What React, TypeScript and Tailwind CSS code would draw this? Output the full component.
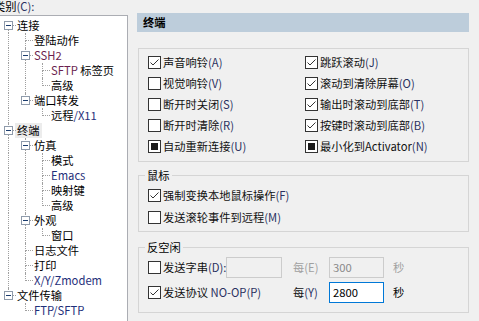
import type { ReactNode } from "react";

type TreeRow = {
  label: ReactNode;
  guides: boolean[];
  kids?: boolean;
  last?: boolean;
  first?: boolean;
  sel?: boolean;
};

const red = (t: string) => <span className="text-[#6b1f4f]">{t}</span>;
const blue = (t: string) => <span className="text-[#1f2f7a]">{t}</span>;

const tree: TreeRow[] = [
  { label: "连接", guides: [], kids: true, first: true },
  { label: "登陆动作", guides: [true] },
  { label: red("SSH2"), guides: [true], kids: true },
  { label: <>{red("SFTP")} 标签页</>, guides: [true, true] },
  { label: "高级", guides: [true, true], last: true },
  { label: "端口转发", guides: [true], kids: true, last: true },
  { label: <>远程{blue("/X11")}</>, guides: [true, false], last: true },
  { label: "终端", guides: [], kids: true, sel: true },
  { label: "仿真", guides: [true], kids: true },
  { label: "模式", guides: [true, true] },
  { label: blue("Emacs"), guides: [true, true] },
  { label: "映射键", guides: [true, true] },
  { label: "高级", guides: [true, true], last: true },
  { label: "外观", guides: [true], kids: true },
  { label: "窗口", guides: [true, true], last: true },
  { label: "日志文件", guides: [true] },
  { label: "打印", guides: [true] },
  { label: blue("X/Y/Zmodem"), guides: [true], last: true },
  { label: "文件传输", guides: [], kids: true, last: true },
  { label: blue("FTP/SFTP"), guides: [false], last: true },
];

function Row({ row }: { row: TreeRow }) {
  return (
    <div className="flex h-[15px] items-center">
      {row.guides.map((g, i) => (
        <div key={i} className="relative h-full w-[17px] shrink-0">
          {g && <div className="absolute left-[8px] top-0 bottom-0 border-l border-dotted border-[#a0a0a0]" />}
        </div>
      ))}
      <div className="relative h-full w-[17px] shrink-0">
        {!row.first && <div className="absolute left-[8px] top-0 h-[8px] border-l border-dotted border-[#a0a0a0]" />}
        {!row.last && <div className="absolute left-[8px] top-[7px] bottom-0 border-l border-dotted border-[#a0a0a0]" />}
        <div className="absolute left-[9px] top-[7px] w-[7px] border-t border-dotted border-[#a0a0a0]" />
        {row.kids && (
          <div className="absolute left-[4px] top-[3px] flex h-[9px] w-[9px] items-center justify-center border border-[#8f9bab] bg-white">
            <div className="h-px w-[5px] bg-[#1a3c6e]" />
          </div>
        )}
      </div>
      <span
        className={`whitespace-nowrap text-[11.25px] leading-[15px] text-black ${row.sel ? "-ml-[2px] bg-[#ececec] px-[2px]" : ""}`}
      >
        {row.label}
      </span>
    </div>
  );
}

function Check({ state }: { state: "on" | "off" | "mixed" }) {
  return (
    <span className="flex h-[13px] w-[13px] shrink-0 items-center justify-center border border-[#333333] bg-white">
      {state === "on" && (
        <svg width="11" height="11" viewBox="0 0 11 11">
          <path d="M1.5 5.5 L4 8 L9.5 2.5" stroke="#333" strokeWidth="1" fill="none" />
        </svg>
      )}
      {state === "mixed" && <span className="h-[7px] w-[7px] bg-[#1a1a1a]" />}
    </span>
  );
}

function Opt({ state, text, key2 }: { state: "on" | "off" | "mixed"; text: string; key2: string }) {
  return (
    <div className="flex items-center">
      <Check state={state} />
      <span className="ml-[2px] whitespace-nowrap text-[11.25px] text-[#111]">
        {text}
        <span className="text-[#2a3060]">{key2}</span>
      </span>
    </div>
  );
}

export default function App() {
  const left: [("on" | "off" | "mixed"), string, string][] = [
    ["on", "声音响铃", "(A)"],
    ["off", "视觉响铃", "(V)"],
    ["off", "断开时关闭", "(S)"],
    ["off", "断开时清除", "(R)"],
    ["mixed", "自动重新连接", "(U)"],
  ];
  const right: [("on" | "off" | "mixed"), string, string][] = [
    ["on", "跳跃滚动", "(J)"],
    ["on", "滚动到清除屏幕", "(O)"],
    ["on", "输出时滚动到底部", "(T)"],
    ["on", "按键时滚动到底部", "(B)"],
    ["mixed", "最小化到Activator", "(N)"],
  ];

  return (
    <div className="flex h-[321px] w-[479px] overflow-hidden bg-[#f0f0f0] font-['Noto_Sans_CJK_SC',sans-serif]">
      {/* category tree */}
      <div className="flex w-[128px] shrink-0 flex-col">
        <div className="h-[15px] overflow-hidden">
          <span className="-ml-[6px] block whitespace-nowrap text-[11.25px] leading-[13px] text-black">
            类别<span className="text-[#2a3060]">(C):</span>
          </span>
        </div>
        <div className="flex-1 border-t border-r border-[#abadb3] bg-white pt-[2px]">
          {tree.map((r, i) => (
            <Row key={i} row={r} />
          ))}
        </div>
      </div>

      {/* settings */}
      <div className="ml-[9px] flex w-[332px] flex-col pt-[13px]">
        <div className="h-[19px] bg-[#bdcddb] pl-[6px] text-[11.25px] font-bold leading-[19px] text-black">终端</div>

        <div className="ml-[1px] mt-[16px] h-[114px] w-[331px] border border-[#d5d5d5] pl-[9px] pt-[3px]">
          <div className="grid grid-cols-[157px_1fr]">
            {left.map((l, i) => (
              <div key={i} className="contents">
                <div className="flex h-[21px] items-center">
                  <Opt state={l[0]} text={l[1]} key2={l[2]} />
                </div>
                <div className="flex h-[21px] items-center">
                  <Opt state={right[i][0]} text={right[i][1]} key2={right[i][2]} />
                </div>
              </div>
            ))}
          </div>
        </div>

        <fieldset className="ml-[1px] mt-[5px] w-[331px] border border-[#d5d5d5] pb-[3px] pl-[9px]">
          <legend className="ml-[-3px] px-[2px] text-[11.25px] leading-[16px] text-black">鼠标</legend>
          <div className="pt-[1px]">
            <div className="flex h-[22px] items-center">
              <Opt state="on" text="强制变换本地鼠标操作" key2="(F)" />
            </div>
            <div className="flex h-[22px] items-center">
              <Opt state="off" text="发送滚轮事件到远程" key2="(M)" />
            </div>
          </div>
        </fieldset>

        <fieldset className="ml-[1px] mt-[7px] w-[331px] border border-[#d5d5d5] pb-[6px] pl-[9px]">
          <legend className="ml-[-3px] px-[2px] text-[11.25px] leading-[16px] text-black">反空闲</legend>
          <div className="mt-[1px] flex h-[22px] items-center text-[11.25px]">
            <div className="w-[78px] shrink-0">
              <Opt state="off" text="发送字串" key2="(D):" />
            </div>
            <div className="w-[67px] shrink-0">
              <div className="h-[21px] w-[56px] border border-[#cccccc] bg-[#f0f0f0]" />
            </div>
            <span className="w-[36px] shrink-0 text-[#a0a0a0]">每(E)</span>
            <div className="w-[64px] shrink-0">
              <div className="h-[21px] w-[55px] border border-[#cccccc] bg-[#f0f0f0] pl-[3px] leading-[19px] text-[#8a8a8a]">
                300
              </div>
            </div>
            <span className="text-[#a0a0a0]">秒</span>
          </div>
          <div className="flex h-[28px] items-center text-[11.25px]">
            <div className="w-[145px] shrink-0">
              <Opt state="on" text="发送协议 " key2="NO-OP(P)" />
            </div>
            <span className="w-[36px] shrink-0 text-[#111]">
              每<span className="text-[#2a3060]">(Y)</span>
            </span>
            <div className="w-[64px] shrink-0">
              <div className="h-[21px] w-[55px] border border-[#0078d7] bg-white pl-[3px] leading-[19px] text-black">
                2800
              </div>
            </div>
            <span className="text-black">秒</span>
          </div>
        </fieldset>
      </div>
    </div>
  );
}
